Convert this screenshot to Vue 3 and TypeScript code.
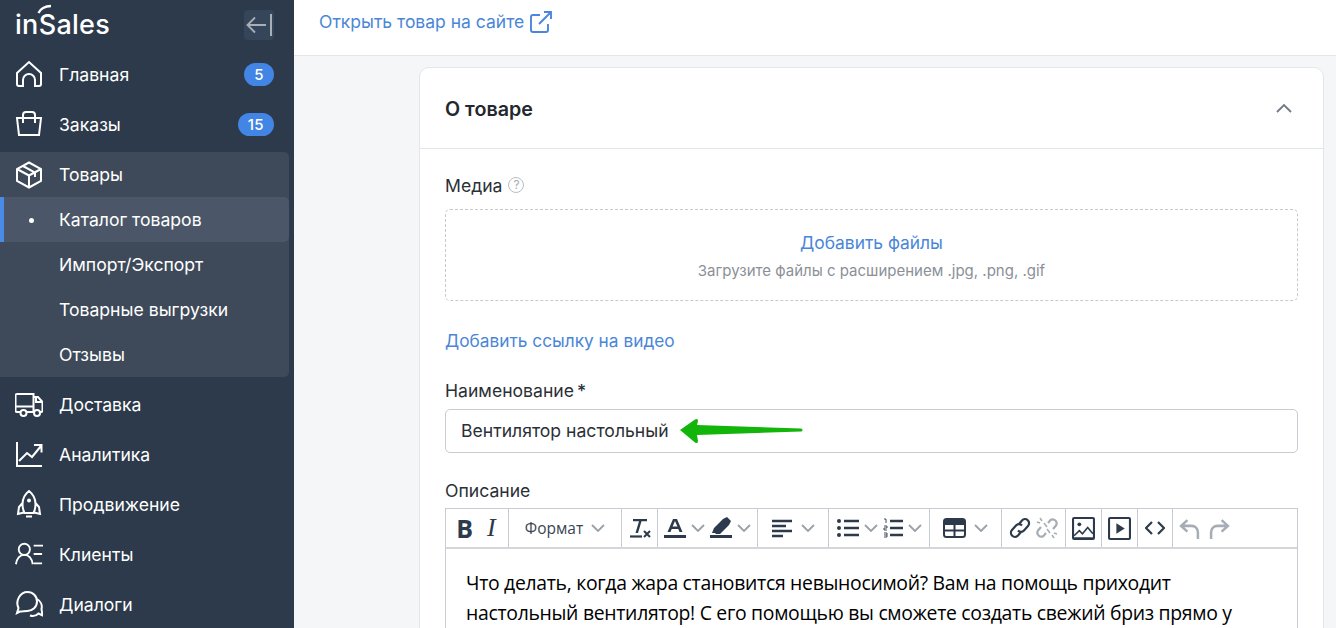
<template>
  <div class="app">
    <aside class="sidebar">
      <div class="logo-row">
        <div class="logo">
          <span>inSales</span>
          <svg class="logo-arc" width="18" height="12" viewBox="0 0 18 12"><path d="M1.500 10C3 6 8 3 14 3" fill="none" stroke="#fff" stroke-width="2.400" /></svg>
        </div>
        <button class="collapse">
          <svg width="28" height="24" viewBox="0 0 28 24" fill="none" stroke="#a9afb7" stroke-width="1.800">
            <path d="M2 12h19M10 4.500 2.500 12l7.500 7.500" />
            <path d="M26 1v22" stroke-width="2" />
          </svg>
        </button>
      </div>

      <a class="nav-item">
        <svg class="nav-icon" viewBox="0 0 28 28"><path d="M2 13 14 2l12 11v11a2 2 0 0 1-2 2h-4v-6a6 6 0 0 0-12 0v6H4a2 2 0 0 1-2-2z" /></svg>
        <span>Главная</span>
        <em class="badge">5</em>
      </a>
      <a class="nav-item">
        <svg class="nav-icon" viewBox="0 0 28 28"><path d="M2 8h24l-2 17H4zM8 13V5a3 3 0 0 1 3-3h6a3 3 0 0 1 3 3v8" /></svg>
        <span>Заказы</span>
        <em class="badge">15</em>
      </a>

      <div class="nav-group">
        <a class="nav-item group-head">
          <svg class="nav-icon" viewBox="0 0 28 28"><path d="M14 1.500 26 8v12l-12 6.500L2 20V8zM2 8l12 6.500L26 8M14 14.500v12M8 5l12 6.500V16" /></svg>
          <span>Товары</span>
        </a>
        <a class="sub-item current"><i class="dot"></i>Каталог товаров</a>
        <a class="sub-item">Импорт/Экспорт</a>
        <a class="sub-item">Товарные выгрузки</a>
        <a class="sub-item">Отзывы</a>
      </div>

      <a class="nav-item">
        <svg class="nav-icon" viewBox="0 0 28 28"><path d="M5 22H2a1.500 1.500 0 0 1-1.500-1.500v-15A1.500 1.500 0 0 1 2 4h16.500v18H12M18.500 7H23l4.500 5v8.500A1.500 1.500 0 0 1 26 22h-1M18.500 22h.5M.5 16.500h18M21 7v5h6.500" /><circle cx="8.500" cy="23" r="3" /><circle cx="22" cy="23" r="3" /></svg>
        <span>Доставка</span>
      </a>
      <a class="nav-item">
        <svg class="nav-icon" viewBox="0 0 28 28"><path d="M2 2v24h25M4 21l8-8 5 4 9-11M19 5h7.500v7.500" /></svg>
        <span>Аналитика</span>
      </a>
      <a class="nav-item">
        <svg class="nav-icon" viewBox="0 0 28 28"><path d="M14 1c4.500 3.500 6.500 8.500 6.500 13 0 3.500-1 7-2 9h-9c-1-2-2-5.500-2-9C7.500 9.500 9.500 4.500 14 1zM7.500 13l-3.500 4-1 7 6-1.500M20.500 13l3.500 4 1 7-6-1.500M11 26.500h6" /><circle cx="14" cy="10.500" r="1" /></svg>
        <span>Продвижение</span>
      </a>
      <a class="nav-item">
        <svg class="nav-icon" viewBox="0 0 30 28"><circle cx="10" cy="9" r="6" /><path d="M1 25c1-6 4-10 9-10s8 4 9 10M20 5h10M20 14h9M20 24h9" /></svg>
        <span>Клиенты</span>
      </a>
      <a class="nav-item">
        <svg class="nav-icon" viewBox="0 0 28 28"><path d="M5 21.500 2 23l1.500-5C0 11 5 2 12.500 2 18 2 22 6 22 11.500S17.500 21 12.500 21c-2.500 0-5 .5-7.500.5z" /><path d="M22 9c3.500 2 5.500 6 4.500 10l1 6.500-4-2c-2 2-5.500 3-8.500 2" /></svg>
        <span>Диалоги</span>
      </a>
    </aside>

    <main class="content">
      <div class="topbar">
        <a class="link">Открыть товар на сайте</a>
        <svg class="ext" width="24" height="24" viewBox="0 0 24 24" fill="none" stroke="#4a86e0" stroke-width="1.900">
          <path d="M19 14v6a2 2 0 0 1-2 2H4a2 2 0 0 1-2-2V7a2 2 0 0 1 2-2h7M10 14 22 2M15 2h7v7" />
        </svg>
      </div>

      <section class="card">
        <header class="card-head">
          <h2>О товаре</h2>
          <svg width="18" height="10" viewBox="0 0 18 10" fill="none" stroke="#6f7a86" stroke-width="1.800"><path d="M2 9 9 2l7 7" /></svg>
        </header>
        <div class="card-body">
          <div class="label media-label">
            Медиа
            <span class="hint">?</span>
          </div>
          <div class="dropzone">
            <a class="drop-link">Добавить файлы</a>
            <p>Загрузите файлы с расширением .jpg, .png, .gif</p>
          </div>
          <a class="video-link">Добавить ссылку на видео</a>

          <div class="label name-label">Наименование <b>*</b></div>
          <div class="input">
            <span>Вентилятор настольный</span>
            <svg class="arrow" width="124" height="26" viewBox="0 0 124 26">
              <path d="M0 12 15 1.500Q18 0 18 3L17 7 121 10.500a1.500 1.500 0 0 1 0 3L17 17l1 6q0 3-3 1.500z" fill="#13b50a" />
            </svg>
          </div>

          <div class="label desc-label">Описание</div>
          <div class="editor">
            <div class="toolbar">
              <div class="tool w63">
                <span class="tb-b">B</span>
                <span class="tb-i">I</span>
              </div>
              <div class="tool w113">
                <span class="tb-format">Формат</span>
                <svg class="chev" viewBox="0 0 14 8"><path d="M1 1l6 6 6-6" /></svg>
              </div>
              <div class="tool w36">
                <svg width="22" height="24" viewBox="0 0 22 24"><path d="M4 3h14v2.200h-5.500L9 17H6.500l3.500-11.800H4z" fill="#2c3a4b" /><path d="M1 20.500h12" stroke="#2c3a4b" stroke-width="2.200" /><path d="M15 15l6 6M21 15l-6 6" stroke="#2c3a4b" stroke-width="2" /></svg>
              </div>
              <div class="tool w100">
                <svg width="22" height="24" viewBox="0 0 22 24"><path d="M3.500 16 9 3h4l5.500 13h-3l-1.200-3H7.700l-1.200 3zM8.600 10.500h4.800L11 5z" fill="#2c3a4b" /><rect y="19" width="22" height="3" fill="#2c3a4b" /></svg>
                <svg class="chev" viewBox="0 0 14 8"><path d="M1 1l6 6 6-6" /></svg>
                <svg width="22" height="24" viewBox="0 0 22 24"><path d="M2 17l2-5 9-9 4-2 4 4-2 4-9 9-4 0-1-1z" fill="#2c3a4b" /><rect y="19" width="22" height="3" fill="#2c3a4b" /></svg>
                <svg class="chev" viewBox="0 0 14 8"><path d="M1 1l6 6 6-6" /></svg>
              </div>
              <div class="tool w71">
                <svg width="22" height="20" viewBox="0 0 22 20"><path d="M1 3h20M1 8h14M1 13h20M1 18h11" stroke="#2c3a4b" stroke-width="2.400" /></svg>
                <svg class="chev" viewBox="0 0 14 8"><path d="M1 1l6 6 6-6" /></svg>
              </div>
              <div class="tool w101">
                <svg width="22" height="20" viewBox="0 0 22 20"><path d="M7 3h15M7 10h15M7 17h15" stroke="#2c3a4b" stroke-width="2.400" /><circle cx="2" cy="3" r="2" fill="#2c3a4b" /><circle cx="2" cy="10" r="2" fill="#2c3a4b" /><circle cx="2" cy="17" r="2" fill="#2c3a4b" /></svg>
                <svg class="chev" viewBox="0 0 14 8"><path d="M1 1l6 6 6-6" /></svg>
                <svg width="20" height="20" viewBox="0 0 20 20"><path d="M7 3h13M7 10h13M7 17h13" stroke="#2c3a4b" stroke-width="2.400" /><path d="M1 1h2v4M1 8h3v2H1v2h3M1 15h3v4H1M1 17h3" fill="none" stroke="#2c3a4b" stroke-width=".9" /></svg>
                <svg class="chev" viewBox="0 0 14 8"><path d="M1 1l6 6 6-6" /></svg>
              </div>
              <div class="tool w72">
                <svg width="23" height="20" viewBox="0 0 23 20"><rect x="1" y="1" width="21" height="18" rx="2.500" fill="none" stroke="#2c3a4b" stroke-width="2" /><path d="M1 3.500a2 2 0 0 1 2-2h17a2 2 0 0 1 2 2V7H1z" fill="#2c3a4b" /><path d="M1 12.500h21M11.500 6v13" stroke="#2c3a4b" stroke-width="2" /></svg>
                <svg class="chev" viewBox="0 0 14 8"><path d="M1 1l6 6 6-6" /></svg>
              </div>
              <div class="tool w64">
                <svg width="24" height="24" viewBox="0 0 22 24" fill="none" stroke="#2c3a4b" stroke-width="2.200"><path d="M10 8l3-3.500a4 4 0 0 1 6 5.500l-4 4.500a4 4 0 0 1-6 0" /><path d="M12 16l-3 3.500a4 4 0 0 1-6-5.500l4-4.500a4 4 0 0 1 6 0" /></svg>
                <svg width="24" height="24" viewBox="0 0 22 24" fill="none" stroke="#a7adb4" stroke-width="2.200"><path d="M12 7l2.500-3a4 4 0 0 1 5.500 5.500l-3 3.500M10 17l-2.500 3a4 4 0 0 1-5.500-5.500l3-3.500" /><path d="M4 2l2 3M1 6l3 1M18 22l-2-3M21 18l-3-1M8 7l3 4M14 17l-3-4" stroke-width="1.500" /></svg>
              </div>
              <div class="tool w36">
                <svg width="23" height="23" viewBox="0 0 22 22" fill="none" stroke="#2c3a4b"><rect x="1" y="1" width="20" height="20" rx="1" stroke-width="2" /><circle cx="7" cy="7" r="1.800" fill="#2c3a4b" stroke="none" /><path d="M2 18l5-5 3 3 5-6 5 6M2 20h18" stroke-width="1.500" /></svg>
              </div>
              <div class="tool w36">
                <svg width="23" height="23" viewBox="0 0 22 22"><rect x="1" y="1" width="20" height="20" rx="1" fill="none" stroke="#2c3a4b" stroke-width="2" /><path d="M8 6l8 5-8 5z" fill="#2c3a4b" /></svg>
              </div>
              <div class="tool w35">
                <svg width="20" height="14" viewBox="0 0 20 14" fill="none" stroke="#2c3a4b" stroke-width="2.200"><path d="M7 1 1 7l6 6M13 1l6 6-6 6" /></svg>
              </div>
              <div class="tool undo">
                <svg width="21" height="21" viewBox="0 0 20 20" fill="none" stroke="#a7adb4" stroke-width="2.400"><path d="M8 2 2 7.500 8 13M2 7.500h10a6 6 0 0 1 6 6V20" /></svg>
                <svg width="21" height="21" viewBox="0 0 20 20" fill="none" stroke="#a7adb4" stroke-width="2.400"><path d="M12 2l6 5.500-6 5.500M18 7.500H8a6 6 0 0 0-6 6V20" /></svg>
              </div>
            </div>
            <div class="editor-text">
              Что делать, когда жара становится невыносимой? Вам на помощь приходит<br />
              настольный вентилятор! С его помощью вы сможете создать свежий бриз прямо у
            </div>
          </div>
        </div>
      </section>
    </main>
  </div>
</template>

<script setup lang="ts"></script>

<style>
html,
body {
  margin: 0;
  height: 100%;
  overflow: hidden;
}
</style>

<style scoped>
.app {
  display: flex;
  width: 1336px;
  height: 628px;
  overflow: hidden;
  font-family: Inter, "Noto Sans", sans-serif;
  font-size: 17.600px;
  color: #2b2f36;
  background: #f5f6f8;
}

.sidebar {
  flex: none;
  width: 294px;
  background: #2c3a4b;
  color: #fff;
}

.logo-row {
  display: flex;
  align-items: center;
  justify-content: space-between;
  height: 49px;
  padding: 0 20px 0 15px;
}

.logo {
  position: relative;
  font-size: 27px;
  font-weight: 500;
  letter-spacing: 0.3px;
  line-height: 50px;
}

.logo-arc {
  position: absolute;
  left: 22px;
  top: 3px;
}

.collapse {
  display: flex;
  align-items: center;
  justify-content: center;
  width: 30px;
  height: 30px;
  padding: 0;
  border: 0;
  border-radius: 4px;
  background: #36465a;
}

.nav-item {
  display: flex;
  align-items: center;
  height: 50px;
  padding: 0 20px 0 15px;
}

.nav-item span {
  flex: 1;
  margin-left: 16px;
}

.nav-icon {
  flex: none;
  width: 28px;
  height: 28px;
  fill: none;
  stroke: #fff;
  stroke-width: 2;
}

.badge {
  min-width: 9px;
  padding: 0 10px;
  border-radius: 12px;
  background: #4285e4;
  font-style: normal;
  font-size: 15px;
  font-weight: 500;
  letter-spacing: 0.4px;
  line-height: 23px;
  text-align: center;
}

.nav-group {
  width: 289px;
  height: 225px;
  border-radius: 0 5px 5px 0;
  background: #3e4a5a;
  margin-top: 3px;
  margin-bottom: 2px;
  overflow: hidden;
}

.group-head {
  height: 45px;
}

.sub-item {
  display: flex;
  align-items: center;
  height: 45px;
  padding-left: 59px;
  position: relative;
}

.current {
  background: #4b5768;
  border-radius: 0 5px 5px 0;
  box-shadow: inset 4px 0 0 #4a8be8;
}

.dot {
  position: absolute;
  left: 29px;
  top: 21px;
  width: 5px;
  height: 5px;
  border-radius: 50%;
  background: #fff;
}

.content {
  flex: 1;
  min-width: 0;
}

.topbar {
  display: flex;
  align-items: center;
  height: 56px;
  padding: 0 0 12px 25px;
  box-sizing: border-box;
  background: #fff;
  border-bottom: 1px solid #e4e6ea;
}

.link {
  color: #4a86d8;
  font-size: 17.500px;
}

.ext {
  margin-left: 5px;
}

.card {
  margin: 11px 12px 0 125px;
  background: #fff;
  border: 1px solid #e4e6ea;
  border-radius: 10px;
  height: 600px;
}

.card-head {
  display: flex;
  align-items: center;
  justify-content: space-between;
  height: 80px;
  padding: 0 30px 0 25px;
  border-bottom: 1px solid #e4e6ea;
}

.card-head h2 {
  margin: 2px 0 0;
  font-size: 19.700px;
  font-weight: 600;
  color: #23272e;
}

.card-body {
  padding: 0 25px;
}

.label {
  line-height: 24px;
}

.media-label {
  display: flex;
  align-items: center;
  gap: 6px;
  padding-top: 25px;
  height: 24px;
}

.hint {
  display: flex;
  align-items: center;
  justify-content: center;
  width: 14px;
  height: 14px;
  margin-top: -2px;
  border: 1.500px solid #b9bec5;
  border-radius: 50%;
  font-size: 12px;
  color: #a5abb3;
}

.dropzone {
  margin-top: 11px;
  height: 92px;
  box-sizing: border-box;
  border: 1px dashed #c6cad0;
  border-radius: 5px;
  text-align: center;
  padding-top: 21px;
}

.drop-link {
  color: #4a86d8;
  font-size: 17.400px;
  line-height: 24px;
}

.dropzone p {
  margin: 6px 0 0;
  color: #8b9097;
  font-size: 15px;
  line-height: 20px;
}

.video-link {
  display: block;
  margin-top: 27px;
  color: #4a86d8;
  font-size: 17.300px;
  line-height: 26px;
}

.name-label {
  margin-top: 25px;
}

.name-label b {
  font-weight: 500;
  margin-left: -2px;
}

.input {
  position: relative;
  display: flex;
  align-items: center;
  height: 44px;
  margin-top: 6px;
  box-sizing: border-box;
  border: 1px solid #c8ccd2;
  border-radius: 5px;
  padding: 0 0 2px 15px;
}

.arrow {
  position: absolute;
  left: 234px;
  top: 8px;
}

.desc-label {
  margin-top: 26px;
}

.editor {
  margin-top: 5px;
  border: 1px solid #c8ccd2;
  border-width: 1px 1px 0;
  font-family: "Open Sans", sans-serif;
}

.toolbar {
  display: flex;
  height: 38px;
  border-bottom: 2px solid #d4d6d9;
}

.tool {
  display: flex;
  align-items: center;
  justify-content: center;
  gap: 5px;
  box-sizing: border-box;
  border-right: 1px solid #c8ccd2;
}

.w35 { width: 35px; }
.w36 { width: 36px; }
.w63 { width: 63px; gap: 14px; padding-right: 2px; }
.w64 { width: 64px; gap: 3px; }
.w71 { width: 71px; gap: 8px; }
.w72 { width: 72px; gap: 8px; }
.w100 { width: 100px; }
.w101 { width: 101px; }
.w113 { width: 113px; gap: 8px; }

.undo {
  width: 70px;
  gap: 9px;
  padding-right: 8px;
  border-right: 0;
}

.tb-b {
  font-size: 25px;
  font-weight: 700;
  color: #2c3a4b;
}

.tb-i {
  font-family: "Liberation Serif", serif;
  font-size: 26px;
  font-style: italic;
  color: #2c3a4b;
}

.tb-format {
  font-size: 15.500px;
  color: #3a4552;
}

.chev {
  flex: none;
  width: 14px;
  height: 8px;
  fill: none;
  stroke: #9aa1a9;
  stroke-width: 1.800;
}

.editor-text {
  padding: 19px 20px 0;
  font-size: 19.400px;
  letter-spacing: -0.3px;
  line-height: 30px;
  color: #000;
  white-space: nowrap;
}
</style>
